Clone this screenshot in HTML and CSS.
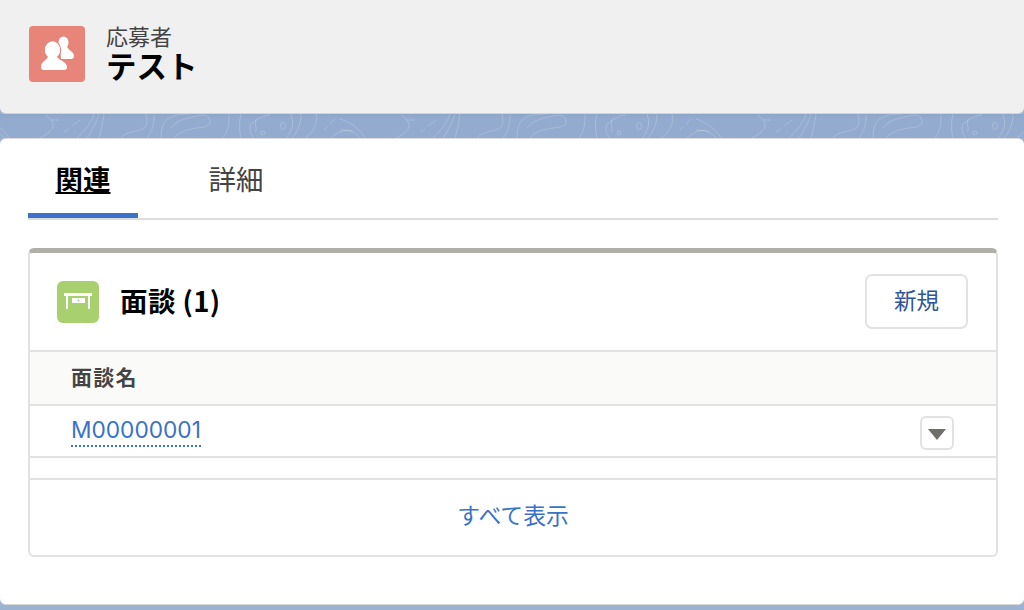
FILE: index.html
```html
<!DOCTYPE html>
<html lang="ja">
<head>
  <meta charset="UTF-8" />
  <meta name="viewport" content="width=device-width, initial-scale=1.0" />
  <title>応募者 テスト</title>
  <link rel="stylesheet" href="styles.css">
</head>
<body>
  <header class="record-head">
    <div class="record-icon">
      <svg viewBox="0 0 56 56" width="56" height="56">
        <ellipse cx="34.500" cy="16.500" rx="5" ry="6" fill="#fff"/>
        <path fill="#fff" d="M31 20h7c0 4 7 5 7 10 0 2-1 3-3 3H32z"/>
        <g fill="#fff" stroke="#e8857a" stroke-width="2.500" paint-order="stroke">
          <ellipse cx="23.500" cy="24" rx="7.500" ry="8.500"/>
          <path d="M19 30h9c0 4 10 5 10 11 0 2-1 3-3 3H15c-2 0-3-1-3-3 0-6 7-7 7-11z"/>
        </g>
        <ellipse cx="23.500" cy="24" rx="7.500" ry="8.500" fill="#fff"/>
      </svg>
    </div>
    <div class="record-title">
      <div class="record-type">応募者</div>
      <h1>テスト</h1>
    </div>
  </header>

  <div class="band">
    <svg viewBox="0 0 1024 24" width="1024" height="24">
      <defs>
        <g id="topo" fill="none" stroke="#fff" stroke-opacity=".2">
          <path d="M340 5c10 3 20 10 25 19M340 16c8 0 16 2 20 8"/>
          <path d="M402 1c5 4 9 10 6 14-3 4-8 7-12 9M407 6h8M420 18l5-3M428 12l8-6"/>
          <path d="M433 24c6-6 14-14 17-24M443 24c5-7 9-15 12-24M455 24c2-7 4-15 5-24"/>
          <path d="M502 0c2 8 1 14-6 16-8 2-15 3-19 8M510 1c0 8-1 15-7 23"/>
          <path d="M517 24c0-10 2-18 10-21 5-2 10-3 20-3"/>
          <path d="M527 14c6-8 16-10 26-12 8-2 12-1 13 6 .5 4-5 5-13 6-8 1-19 4-23 10"/>
          <path d="M585 0c0 8 0 16-6 24M597 0c-2 8-2 16 0 24M607 10c-2 5-1 10 3 14"/>
          <path d="M607 10c2-2 5-2 5-4 4-2 8-5 14-5M612 6c-2 5 2 8-1 12"/>
          <circle cx="619" cy="19" r="2"/>
          <ellipse cx="639" cy="12" rx="2.500" ry="3.500"/>
          <path d="M647 0c3 8 2 16-5 24M657 0c0 8-2 16-9 24M672 0c2 10-2 18-11 24"/>
          <path d="M680 16l3-3M686 10l5-5"/>
          <path d="M687 24c6-6 14-9 22-7"/>
        </g>
      </defs>
      <use href="#topo" x="-356"/>
      <use href="#topo"/>
      <use href="#topo" x="356"/>
      <use href="#topo" x="712"/>
    </svg>
  </div>

  <main class="panel">
    <nav class="tabs">
      <a class="tab active">関連</a>
      <a class="tab">詳細</a>
    </nav>

    <section class="card">
      <div class="card-head">
        <div class="card-icon">
          <svg viewBox="0 0 42 42" width="42" height="42">
            <path fill="#fff" d="M7 12h28v3h-2v13h-2V15H11v13H9V15H7z"/>
            <path fill="#fff" d="M15 17h13v5H15z"/>
            <circle cx="21.500" cy="19.500" r="1" fill="#a8d06e"/>
          </svg>
        </div>
        <h2>面談 (1)</h2>
        <button class="new-btn">新規</button>
      </div>
      <div class="col-head">面談名</div>
      <div class="row">
        <a class="record-link">M00000001</a>
        <button class="menu-btn"><span class="caret"></span></button>
      </div>
      <div class="spacer"></div>
      <div class="card-foot"><a>すべて表示</a></div>
    </section>
  </main>
</body>
</html>
```

FILE: styles.css
```css
html, body {
  height: 100%;
}
body {
  display: flex;
  flex-direction: column;
  margin: 0;
  overflow: hidden;
  background: #9cb2d1;
  font-family: "Noto Sans CJK JP", "Liberation Sans", sans-serif;
  color: #000;
}
.record-head {
  display: flex;
  align-items: center;
  box-sizing: border-box;
  height: 114px;
  padding: 0 0 6px 29px;
  background: #f0f0f0;
  border-bottom: 1px solid #d4d4d4;
  border-radius: 0 0 6px 6px;
}
.record-icon {
  width: 56px;
  height: 56px;
  margin-right: 21px;
  border-radius: 4px;
  background: #e8857a;
  overflow: hidden;
}
.record-icon svg {
  display: block;
}
.record-title {
  margin-bottom: 3px;
}
.record-type {
  font-size: 22px;
  line-height: 26px;
  color: #444;
}
.record-title h1 {
  margin: 0;
  font-size: 30.500px;
  font-weight: 700;
  line-height: 34px;
}
.band {
  height: 24px;
  background: linear-gradient(#8da5c9, #93abcf 5px);
  overflow: hidden;
}
.band svg {
  display: block;
}
.panel {
  box-sizing: border-box;
  height: 467px;
  padding: 0 26px 0 28px;
  background: #fff;
  border-top: 1px solid #dcdcdc;
  border-bottom: 1px solid #d6d6d6;
  border-radius: 6px;
}
.tabs {
  display: flex;
  height: 79px;
  border-bottom: 2px solid #dcdcdc;
}
.tab {
  box-sizing: border-box;
  width: 110px;
  height: 79px;
  padding-top: 19px;
  margin-right: 43px;
  font-size: 27.500px;
  line-height: 40px;
  text-align: center;
  color: #444;
}
.tab.active {
  border-bottom: 5px solid #3a72c8;
  font-weight: 700;
  color: #000;
  text-decoration: underline;
  text-underline-offset: 2px;
}
.card {
  box-sizing: border-box;
  height: 309px;
  margin-top: 28px;
  border: 2px solid #e2e2e2;
  border-top: 5px solid #b0afa8;
  border-radius: 6px;
}
.card-head {
  display: flex;
  align-items: center;
  box-sizing: border-box;
  height: 99px;
  padding: 0 28px 0 27px;
  border-bottom: 2px solid #e2e2e2;
}
.card-icon {
  width: 42px;
  height: 42px;
  margin-right: 21px;
  border-radius: 6px;
  background: #a8d06e;
}
.card-icon svg {
  display: block;
}
.card-head h2 {
  flex: 1;
  margin: 0 0 4px;
  font-size: 27.500px;
  font-weight: 700;
  line-height: 40px;
  letter-spacing: .4px;
}
.new-btn {
  box-sizing: border-box;
  width: 103px;
  height: 55px;
  padding: 0 0 6px;
  border: 2px solid #e2e2e2;
  border-radius: 7px;
  background: #fff;
  font-family: inherit;
  font-size: 22.500px;
  color: #2f5596;
}
.col-head {
  box-sizing: border-box;
  height: 54px;
  padding-left: 41px;
  border-bottom: 2px solid #e2e2e2;
  background: #fafaf9;
  font-size: 21px;
  font-weight: 700;
  line-height: 48px;
  letter-spacing: 1.300px;
  color: #444;
}
.row {
  display: flex;
  align-items: center;
  justify-content: space-between;
  box-sizing: border-box;
  height: 52px;
  padding: 0 42px 0 41px;
  border-bottom: 2px solid #e2e2e2;
}
.record-link {
  border-bottom: 2px dotted #3a72c8;
  font-family: "Inter", "Liberation Sans", sans-serif;
  font-size: 22.700px;
  line-height: 30px;
  color: #3a72c8;
}
.menu-btn {
  display: flex;
  align-items: center;
  justify-content: center;
  box-sizing: border-box;
  width: 34px;
  height: 34px;
  padding: 0;
  margin-top: 3px;
  border: 2px solid #e2e2e2;
  border-radius: 6px;
  background: #fff;
}
.caret {
  width: 0;
  height: 0;
  margin-top: 3px;
  border-left: 9px solid transparent;
  border-right: 9px solid transparent;
  border-top: 11px solid #706e6b;
}
.spacer {
  height: 22px;
  border-bottom: 2px solid #e2e2e2;
  box-sizing: border-box;
}
.card-foot {
  padding-top: 15px;
  font-size: 22.800px;
  line-height: 40px;
  text-align: center;
  color: #3a72c8;
}
```
